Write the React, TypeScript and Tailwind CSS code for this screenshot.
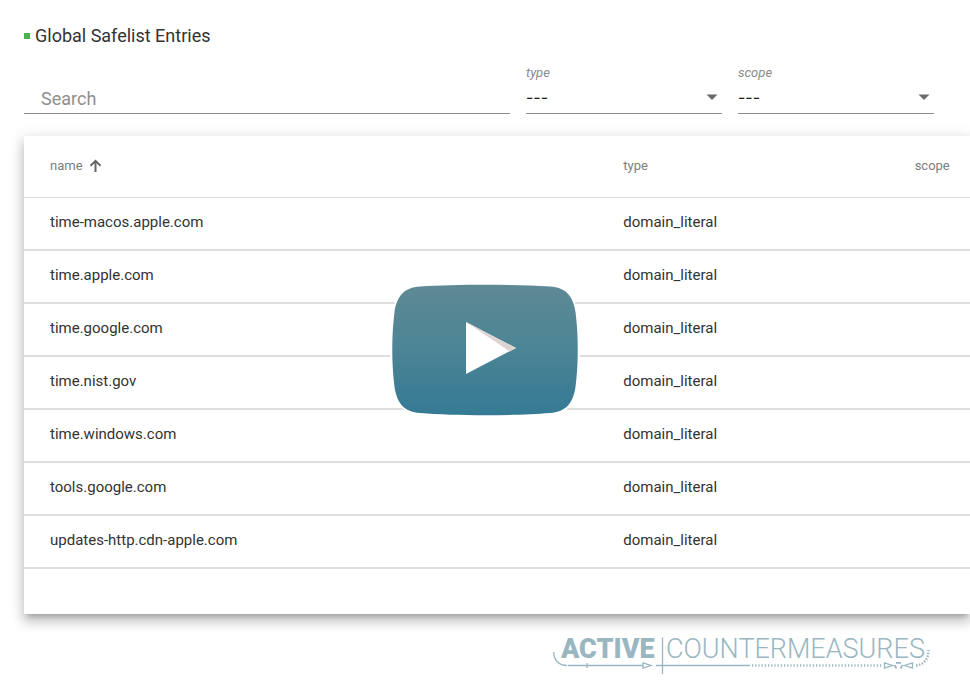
import React from "react";

const entries = [
  "time-macos.apple.com",
  "time.apple.com",
  "time.google.com",
  "time.nist.gov",
  "time.windows.com",
  "tools.google.com",
  "updates-http.cdn-apple.com",
];

function FilterSelect({ label }: { label: string }): React.ReactElement {
  return (
    <div className="flex w-[196px] flex-col">
      <label htmlFor={label} className="text-[13px] leading-4 italic text-[#8a8a8a]">
        {label}
      </label>
      <div className="grid items-center border-b border-[#8c8c8c]">
        <select
          id={label}
          className="col-start-1 row-start-1 h-8 w-full appearance-none bg-transparent font-['Inter',sans-serif] text-base leading-5 text-[#222]"
        >
          <option>---</option>
        </select>
        <svg
          className="pointer-events-none col-start-1 row-start-1 mr-1 justify-self-end"
          width="12"
          height="6"
          viewBox="0 0 12 6"
        >
          <path d="M0.5 0.5h11l-5.5 5.5z" fill="#6b6b6b" />
        </svg>
      </div>
    </div>
  );
}

function SafelistTable(): React.ReactElement {
  return (
    <table className="w-full table-fixed text-left text-[15px] text-[#333]">
      <thead>
        <tr className="h-[61px] border-b border-[#dedede] text-[13px] text-[#7d7d7d]">
          <th className="w-[60.6%] pb-0.5 pl-[26px] font-normal">
            <button className="flex items-center gap-1.5">
              name
              <svg width="13" height="13" viewBox="0 0 13 13" fill="none" stroke="#666" strokeWidth="2">
                <path d="M6.500 13V1.800M1.500 6.800l5-5 5 5" />
              </svg>
            </button>
          </th>
          <th className="w-[30.8%] pb-0.5 pl-[26px] font-normal">type</th>
          <th className="pb-0.5 pl-[26px] font-normal">scope</th>
        </tr>
      </thead>
      <tbody>
        {entries.map((name) => (
          <tr key={name} className="h-[53px] border-b-2 border-[#dedede]">
            <td className="pb-0.5 pl-[26px]">{name}</td>
            <td className="pb-0.5 pl-[26px]">domain_literal</td>
            <td></td>
          </tr>
        ))}
      </tbody>
    </table>
  );
}

function PlayButton(): React.ReactElement {
  return (
    <button
      aria-label="Play video"
      className="absolute top-1/2 left-1/2 -translate-x-1/2 -translate-y-1/2"
    >
      <svg width="190" height="134" viewBox="0 0 190 134">
        <defs>
          <linearGradient id="playFill" x1="0" y1="0" x2="0" y2="1">
            <stop offset="0" stopColor="#5f8995" />
            <stop offset="0.45" stopColor="#4d8595" />
            <stop offset="1" stopColor="#357a94" />
          </linearGradient>
        </defs>
        <path
          d="M30 3.500C65 1.300 125 1.300 160 3.500C176 4.500 183 13 185.500 29C188.500 52 188.500 81 185.500 104C183 120 176 129 160 130C125 133 65 133 30 130C14 129 7 120 4.500 104C1.500 81 1.500 52 4.500 29C7 13 14 4.500 30 3.500Z"
          fill="url(#playFill)"
          stroke="#fff"
          strokeWidth="4"
          paintOrder="stroke"
        />
        <path d="M76 39L126 65L76 91Z" fill="#fff" />
        <path d="M76 39L126 65L119.500 68.300Z" fill="#ddd3d1" />
      </svg>
    </button>
  );
}

function Logo(): React.ReactElement {
  return (
    <div className="relative flex h-10 w-[378px] pl-2 text-[27px] leading-[26px] text-[#9ab7c1]">
      <span className="w-[105px] font-black">ACTIVE</span>
      <span className="font-light">COUNTERMEASURES</span>
      <svg
        className="absolute inset-0"
        width="378"
        height="40"
        viewBox="0 0 378 40"
        fill="none"
        stroke="#9ab7c1"
        strokeWidth="1.300"
      >
        <path d="M0.700 16C0.700 24 6 29.500 14 29.500M15 29.500H90M34 27v5M103 29.500H197M109.500 1.500V38" />
        <path d="M90 27v5l8-2.500zM331.500 27v5l8-2.500zM359.500 27v5l-8-2.500z" />
        <path d="M199 29.500H329" strokeWidth="2.500" strokeDasharray="1.200 2" />
        <path d="M363 29.500C371 28.500 375.500 23 375.500 14" strokeWidth="2.500" strokeDasharray="1.500 1.500" />
        <path d="M343 26.800h5M341.500 29l2 3.500M349.500 29l-2 3.500" strokeWidth="1.800" />
      </svg>
    </div>
  );
}

export default function App(): React.ReactElement {
  return (
    <main className="relative min-h-screen overflow-hidden bg-white pl-6 font-['Roboto',sans-serif]">
      <h1 className="flex items-center gap-[5px] pt-6 text-lg leading-6 text-[#333]">
        <span className="h-1.5 w-1.5 bg-[#4caf50]"></span>
        Global Safelist Entries
      </h1>

      <div className="flex items-end gap-4 pt-[17px] pr-9">
        <input
          type="text"
          aria-label="Search"
          placeholder="Search"
          className="h-[30px] min-w-0 flex-1 border-b border-[#8c8c8c] px-[17px] text-lg placeholder:text-[#8f8f8f] focus:outline-none"
        />
        <FilterSelect label="type" />
        <FilterSelect label="scope" />
      </div>

      <section className="mt-[22px] bg-white pb-[45px] shadow-[0_5px_5px_-3px_rgba(0,0,0,0.2),0_8px_10px_1px_rgba(0,0,0,0.14),0_3px_14px_2px_rgba(0,0,0,0.12)]">
        <SafelistTable />
      </section>

      <footer className="flex justify-end pt-[22px] pr-[39px] pb-6">
        <Logo />
      </footer>

      <PlayButton />
    </main>
  );
}
